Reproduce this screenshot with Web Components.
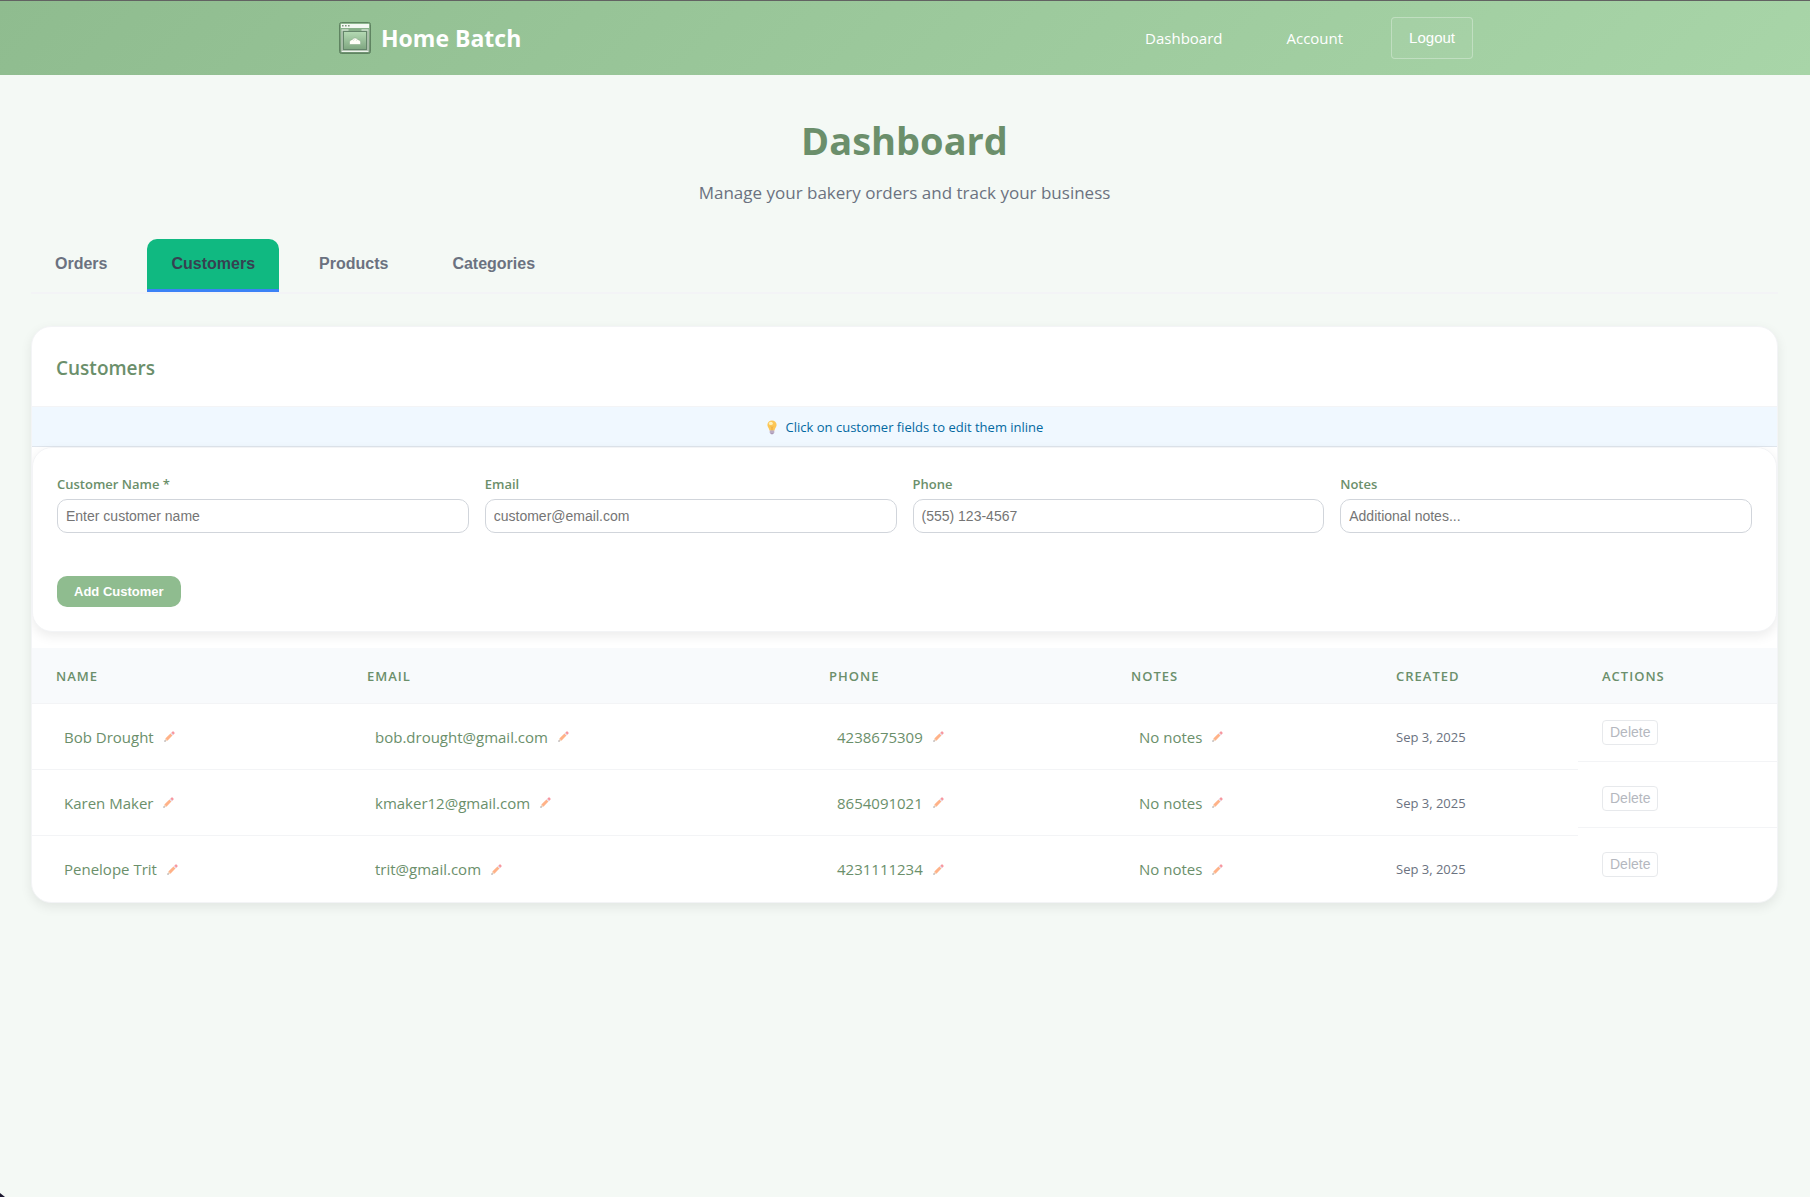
<!DOCTYPE html>
<html lang="en">
<head>
<meta charset="utf-8">
<title>Home Batch - Dashboard</title>
<style>
  :root {
    --green: #8fbc8f;
    --green-light: #a8d5a8;
    --green-dark: #6b8f6b;
    --muted: #6b7280;
    --line: #f3f4f6;
    --ui: "Liberation Sans", Arial, sans-serif;
    --shadow: 0 4px 12px rgba(0, 0, 0, .08);
  }
  body { margin: 0; background: #f4f9f5; color: var(--green-dark); font: 15px/24px "Open Sans", "Segoe UI", sans-serif; }
</style>
</head>
<body>
<hb-app></hb-app>
<script>
const define = (name, html, setup) => {
  const template = document.createElement('template');
  template.innerHTML = html;
  customElements.define(name, class extends HTMLElement {
    constructor() {
      super();
      this.attachShadow({ mode: 'open' }).append(template.content.cloneNode(true));
    }
    connectedCallback() { if (setup) setup(this, this.shadowRoot); }
  });
};

define('hb-logo', `
<style>:host { display: block; width: 34px; height: 34px; } svg { display: block; }</style>
<svg width="34" height="34" viewBox="0 0 34 34" aria-hidden="true">
  <defs>
    <linearGradient id="body" x1="0" y1="0" x2="0" y2="1"><stop offset="0" stop-color="#8fb890"/><stop offset="1" stop-color="#6f9271"/></linearGradient>
    <linearGradient id="glass" x1="0" y1="0" x2="0" y2="1"><stop offset="0" stop-color="#b5dab4"/><stop offset="1" stop-color="#7ea680"/></linearGradient>
  </defs>
  <rect x="2.5" y="1.500" width="31" height="31" rx="2" fill="url(#body)" stroke="#5f8461"/>
  <path d="M4 3h28v4H4z" fill="#f4f8f3"/>
  <path d="M5 4h1.600v1.600H5zM8 4h1.600v1.600H8zM11 4h1.600v1.600H11z" fill="#7d987d"/>
  <path d="M5 9.500v20h26v-20" fill="none" stroke="#b4c5b4" stroke-width="1.600"/>
  <path d="M4.500 9h7M24.500 9h7M4.500 30.500h27" stroke="#eef5ed"/>
  <rect x="6.500" y="10.500" width="23" height="18" fill="url(#glass)" stroke="#64856a"/>
  <path d="M12.500 23.500v-2.200c0-1.600 1.300-2.600 2.600-2.600.6-1 1.600-1.700 2.900-1.700s2.400.7 3 1.700c1.500 0 2.600 1.200 2.600 2.600v2.200z" fill="#fffef8" stroke="#89ad8a" stroke-width=".6"/>
  <path d="M16.500 19.500l.8-1.200M19.500 19.500l.8-1.200" stroke="#b9cfb7" stroke-width=".7"/>
</svg>`);

define('hb-header', `
<style>
  :host { display: block; border-top: 1px solid #626262; background: linear-gradient(135deg, var(--green) 0%, var(--green-light) 100%); }
  .bar { max-width: 1136px; margin: 0 auto; padding: 16px 32px; display: flex; align-items: center; justify-content: space-between; }
  a { color: #fff; text-decoration: none; }
  .brand { display: flex; align-items: center; gap: 10px; font-size: 23px; line-height: 32px; font-weight: 700; }
  nav { display: flex; align-items: center; gap: 32px; }
  nav a { padding: 8px 16px; }
  button { height: 42px; padding: 0 17px; font: 15px/18px var(--ui); color: #fff; background: rgba(255,255,255,.04); border: 1px solid rgba(255,255,255,.3); border-radius: 4px; }
</style>
<div class="bar">
  <a class="brand" href="#"><hb-logo></hb-logo><span>Home Batch</span></a>
  <nav><a href="#dashboard">Dashboard</a><a href="#account">Account</a><button type="button">Logout</button></nav>
</div>`);

define('hb-tab', `
<style>
  :host { display: block; }
  button { display: block; padding: 16px 24px; font: 600 16px/18px var(--ui); color: var(--muted); background: none; border: 0; border-bottom: 3px solid transparent; border-radius: 10px 10px 0 0; }
  :host([active]) button { color: #374151; background: #10b981; border-image: linear-gradient(#3b82f6, #3b82f6) 0 0 3 0; }
</style>
<button type="button"><slot></slot></button>`);

define('hb-tabs', `
<style>:host { display: flex; gap: 16px; border-bottom: 2px solid var(--line); }</style>
<slot></slot>`);

define('hb-bulb', `
<style>:host { display: inline-block; width: 12px; height: 15px; vertical-align: -3px; margin-right: 8px; } svg { display: block; }</style>
<svg width="12" height="15" viewBox="0 0 12 15" aria-hidden="true">
  <path d="M6 .5a4.600 4.600 0 0 0-4.600 4.600c0 2 1.600 3 2.100 5.400h5c.5-2.400 2.100-3.400 2.100-5.400A4.600 4.600 0 0 0 6 .5z" fill="#fcc655"/>
  <ellipse cx="4.800" cy="3.400" rx="2" ry="1.700" fill="#fff0b8"/>
  <path d="M5 6.500l1 1 1-1M6 7.500v3" fill="none" stroke="#e79a35" stroke-width=".7"/>
  <path d="M3.800 10.500h4.400v2.300L7 14.300H5l-1.200-1.500z" fill="#a997b5"/><path d="M3.800 12h4.400" stroke="#dcd2e2" stroke-width=".7"/>
</svg>`);

define('hb-pencil', `
<style>:host { display: block; width: 11px; height: 11px; } svg { display: block; opacity: .65; }</style>
<svg width="11" height="11" viewBox="0 0 12 12" aria-hidden="true">
  <path d="M.4 11.600l1.100-3.300 2.200 2.200z" fill="#e8c9a8"/><path d="M.4 11.600l.5-1.800 1.300 1.300z" fill="#56576b"/>
  <path d="M1.500 8.300l5.500-5.500 2.200 2.200-5.500 5.500z" fill="#ff8a4a"/>
  <path d="M7 2.800l1-1L10.200 4l-1 1z" fill="#d5c7de"/>
  <path d="M8 1.800l1-1a1.200 1.200 0 0 1 1.700 0l.5.5a1.200 1.200 0 0 1 0 1.700l-1 1z" fill="#f4606c"/>
</svg>`);

define('hb-panel', `
<style>
  :host { display: block; background: #fff; border: 1px solid var(--line); border-radius: 20px; box-shadow: var(--shadow); overflow: hidden; }
  h2 { margin: 0; padding: 25px 24px 22px; font-size: 19px; line-height: 32px; font-weight: 600; border-bottom: 1px solid var(--line); }
  .tip { padding: 10px 24px 9px; font-size: 13px; line-height: 20px; text-align: center; color: #0369a1; background: #f0f8ff; border-bottom: 1px solid #dfe5ec; }
</style>
<h2><slot name="heading"></slot></h2>
<div class="tip"><hb-bulb></hb-bulb><slot name="tip"></slot></div>
<slot></slot>`);

define('hb-field', `
<style>
  :host { display: block; }
  label { display: block; margin-bottom: 3px; font-size: 13px; line-height: 24px; font-weight: 600; }
  input { display: block; box-sizing: border-box; width: 100%; height: 34px; padding: 0 8px; font: 14px/18px var(--ui); color: #374151; background: #fff; border: 1px solid #d1d5db; border-radius: 10px; }
  input::placeholder { color: #757575; }
</style>
<label for="control"></label><input id="control">`,
(host, root) => {
  root.querySelector('label').textContent = host.getAttribute('label');
  const input = root.querySelector('input');
  input.type = host.getAttribute('type') || 'text';
  input.placeholder = host.getAttribute('placeholder');
});

define('hb-customer-form', `
<style>
  :host { display: block; margin-bottom: 16px; padding: 24px; background: #fff; border: 1px solid var(--line); border-radius: 20px; box-shadow: var(--shadow); }
  .fields { display: grid; grid-template-columns: repeat(4, 1fr); gap: 16px; margin-bottom: 43px; }
  button { display: block; height: 31px; padding: 0 17px; font: 600 13px/15px var(--ui); color: #fff; background: var(--green); border: 0; border-radius: 10px; }
</style>
<form>
  <div class="fields">
    <hb-field label="Customer Name *" placeholder="Enter customer name"></hb-field>
    <hb-field label="Email" type="email" placeholder="customer@email.com"></hb-field>
    <hb-field label="Phone" type="tel" placeholder="(555) 123-4567"></hb-field>
    <hb-field label="Notes" placeholder="Additional notes..."></hb-field>
  </div>
  <button type="button">Add Customer</button>
</form>`);

define('hb-editable', `
<style>:host { display: flex; align-items: center; gap: 10px; padding: 0 8px; }</style>
<span><slot></slot></span><hb-pencil></hb-pencil>`);

define('hb-customer-table', `
<style>
  :host { display: block; }
  table { width: 100%; table-layout: fixed; border-collapse: separate; border-spacing: 0; }
  th { box-sizing: border-box; height: 56px; padding: 0 24px; text-align: left; font-size: 13px; line-height: 20px; font-weight: 600; letter-spacing: 1px; background: #f8fafc; border-bottom: 1px solid var(--line); }
  td { box-sizing: border-box; height: 66px; padding: 0 24px; border-bottom: 1px solid var(--line); }
  tr:last-child td, tr:last-child .actions { border-bottom: 0; }
  .date { font-size: 13px; color: var(--muted); }
  td.cell { padding: 0; vertical-align: top; border-bottom: 0; }
  .actions { display: flex; padding: 16px 24px; border-bottom: 1px solid var(--line); }
  button { height: 25px; padding: 0 7px 1px; font: 14px/16px var(--ui); color: var(--muted); background: #fff; border: 1px solid #d1d5db; border-radius: 4px; opacity: .5; }
</style>
<table>
  <colgroup><col style="width:311px"><col style="width:462px"><col style="width:302px"><col style="width:265px"><col style="width:206px"><col style="width:199px"></colgroup>
  <thead><tr><th>NAME</th><th>EMAIL</th><th>PHONE</th><th>NOTES</th><th>CREATED</th><th>ACTIONS</th></tr></thead>
  <tbody></tbody>
</table>`,
(host, root) => {
  const customers = [
    ['Bob Drought', 'bob.drought@gmail.com', '4238675309', 'No notes', 'Sep 3, 2025'],
    ['Karen Maker', 'kmaker12@gmail.com', '8654091021', 'No notes', 'Sep 3, 2025'],
    ['Penelope Trit', 'trit@gmail.com', '4231111234', 'No notes', 'Sep 3, 2025']
  ];
  root.querySelector('tbody').innerHTML = customers.map(c => `<tr>${
    c.slice(0, 4).map(v => `<td><hb-editable>${v}</hb-editable></td>`).join('')
  }<td class="date">${c[4]}</td><td class="cell"><div class="actions"><button type="button">Delete</button></div></td></tr>`).join('');
});

define('hb-app', `
<style>
  :host { display: block; position: relative; min-height: 100vh; }
  :host::after { content: ""; position: absolute; left: 0; bottom: 0; width: 5px; height: 4px; background: #1c1830; clip-path: polygon(0 0, 100% 100%, 0 100%); }
  main { padding: 41px 32px 32px 31px; }
  h1 { margin: 0 0 15px; font-size: 38px; line-height: 48px; font-weight: 700; text-align: center; }
  p { margin: 0 0 32px; font-size: 17px; line-height: 28px; text-align: center; color: var(--muted); }
  hb-tabs { margin-bottom: 32px; }
</style>
<hb-header></hb-header>
<main>
  <h1>Dashboard</h1>
  <p>Manage your bakery orders and track your business</p>
  <hb-tabs><hb-tab>Orders</hb-tab><hb-tab active>Customers</hb-tab><hb-tab>Products</hb-tab><hb-tab>Categories</hb-tab></hb-tabs>
  <hb-panel>
    <span slot="heading">Customers</span>
    <span slot="tip">Click on customer fields to edit them inline</span>
    <hb-customer-form></hb-customer-form>
    <hb-customer-table></hb-customer-table>
  </hb-panel>
</main>`);
</script>
</body>
</html>
